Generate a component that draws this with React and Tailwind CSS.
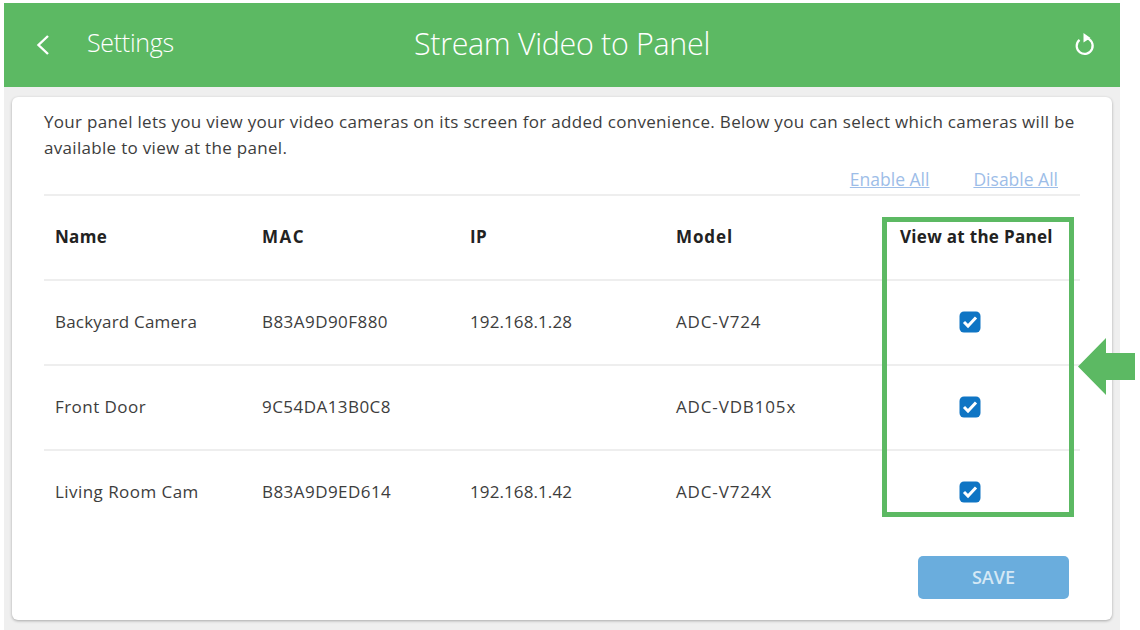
const F = { fontFamily: '"Open Sans", sans-serif' };
const rows = [
  ["Backyard Camera", "B83A9D90F880", "192.168.1.28", "ADC-V724"],
  ["Front Door", "9C54DA13B0C8", "", "ADC-VDB105x"],
  ["Living Room Cam", "B83A9D9ED614", "192.168.1.42", "ADC-V724X"],
];
const cols = "grid grid-cols-[207px_208px_206px_194px_1fr] pl-[11px] items-center pb-[2px]";

function Check() {
  return (
    <svg width="22" height="22" viewBox="0 0 22 22" className="block">
      <rect x="0.5" y="0.5" width="21" height="21" rx="4.5" fill="#0f75c4" />
      <path d="M5 11 L9 15 L17 6.5" fill="none" stroke="#fff" strokeWidth="3" />
    </svg>
  );
}

export default function App() {
  return (
    <div className="relative w-[1140px] h-[630px] overflow-hidden bg-white pl-[4px] pt-[3px] pr-[20px] text-[#3d3d3d]" style={F}>
      <div className="h-[84px] bg-[#5cb963] text-white flex items-center pl-[31px] pr-[24px] pb-[3px]">
        <svg width="16" height="24" viewBox="0 0 16 24" className="mr-[36px] mt-[3px]">
          <path d="M13 3 L3.5 12 L13 21" fill="none" stroke="#fff" strokeWidth="2.4" />
        </svg>
        <span className="text-[25px] font-light w-[327px] tracking-[-0.3px] mb-[2px]">Settings</span>
        <span className="text-[30.4px] font-light flex-1 tracking-[-0.3px]">Stream Video to Panel</span>
        <svg width="22" height="24" viewBox="0 0 22 24" className="mt-[2px]">
          <path d="M5.5 6.8 A8 8 0 1 0 12 5" fill="none" stroke="#fff" strokeWidth="2.2" />
          <path d="M9.5 0 L16.5 5 L9.5 9.5 Z" fill="#fff" />
        </svg>
      </div>
      <div className="h-[543px] bg-[#efefef] px-[8px] pt-[10px]">
        <div className="h-[523px] bg-white rounded-[6px] shadow-[0_1px_3px_rgba(0,0,0,0.3)] px-[32px] pt-[12px]">
          <p className="text-[17px] leading-[26px] tracking-[0.31px] w-[1036px]">
            Your panel lets you view your video cameras on its screen for added convenience. Below you can select which cameras will be available to view at the panel.
          </p>
          <div className="flex justify-end gap-[44px] pr-[22px] text-[17.5px] leading-[24px] text-[#9dbde8] underline mt-[5px] pt-[1px] h-[30px] border-b-2 border-[#eeeeee]">
            <span>Enable All</span>
            <span>Disable All</span>
          </div>
          <div className={cols + " h-[85px] border-b-2 border-[#eeeeee] font-bold text-[17px] tracking-[0.3px] text-[#222]"}>
            <span>Name</span>
            <span className="tracking-[1.5px]">MAC</span>
            <span>IP</span>
            <span className="tracking-[0.9px]">Model</span>
            <span className="pl-[30px]">View at the Panel</span>
          </div>
          {rows.map((r, i) => (
            <div key={r[0]} className={cols + " h-[85px] text-[17px] tracking-[0.2px] border-b-2 " + (i < 2 ? "border-[#eeeeee]" : "border-transparent")}>
              <span className={i === 0 ? "" : "tracking-[0.45px]"}>{r[0]}</span>
              <span className="tracking-[0.45px]">{r[1]}</span>
              <span className="tracking-[0.1px]">{r[2]}</span>
              <span className="tracking-[0.85px]">{r[3]}</span>
              <span className="pl-[89px]"><Check /></span>
            </div>
          ))}
          <div className="flex justify-end pr-[11px] mt-[20px]">
            <button className="w-[151px] h-[43px] rounded-[5px] bg-[#6aaddd] text-[#d5e8f5] text-[18px] font-semibold">SAVE</button>
          </div>
        </div>
      </div>
      <div className="absolute left-[882px] top-[217px] w-[192px] h-[300px] border-[5px] border-[#5cb963]" />
      <svg className="absolute left-[1078px] top-[338px]" width="57" height="57" viewBox="0 0 57 57">
        <path d="M0 28.5 L28 0 V15 H57 V42 H28 V57 Z" fill="#5cb963" />
      </svg>
    </div>
  );
}
